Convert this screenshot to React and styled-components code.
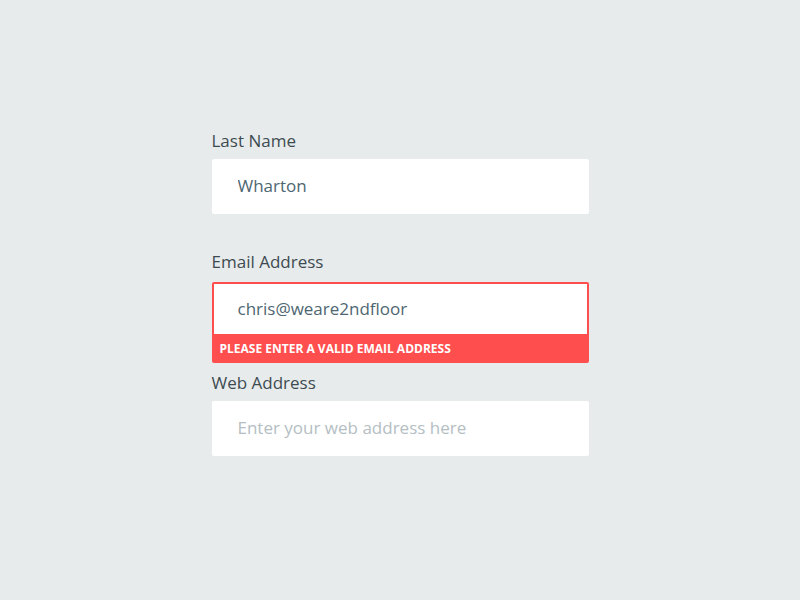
import React from 'react'
import styled, { createGlobalStyle } from 'styled-components'

const GlobalStyle = createGlobalStyle`
  html, body {
    margin: 0;
    padding: 0;
    background: #e8ebec;
  }
  body {
    font-family: "Open Sans", "Liberation Sans", sans-serif;
  }
`

const Page = styled.div`
  width: 800px;
  height: 600px;
  display: flex;
  justify-content: center;
  padding-top: 131px;
  box-sizing: border-box;
`

const Form = styled.form`
  width: 377px;
  display: flex;
  flex-direction: column;
`

const FieldGroup = styled.div`
  display: flex;
  flex-direction: column;
  margin-bottom: ${p => (p.$error ? 10 : 38)}px;
`

const Label = styled.label`
  font-size: 17px;
  line-height: 20px;
  color: #3d4b51;
  margin-bottom: ${p => (p.$error ? 10 : 8)}px;
`

const InputFrame = styled.div`
  display: flex;
  flex-direction: column;
  background: #fff;
  border-radius: 2px;
  border: ${p => (p.$error ? '2px solid #ff4e4e' : 'none')};
  overflow: hidden;
`

const Input = styled.input`
  height: ${p => (p.$error ? 50 : 55)}px;
  border: none;
  outline: none;
  background: #fff;
  padding: 0 0 2px ${p => (p.$error ? 24 : 26)}px;
  font-family: "Open Sans", "Liberation Sans", sans-serif;
  font-size: 17px;
  color: #4e6671;
  box-sizing: border-box;
  width: 100%;

  &::placeholder {
    color: #b4bec3;
  }
`

const ErrorBand = styled.div`
  background: #ff4e4e;
  color: #fff;
  font-size: 12px;
  font-weight: 700;
  text-transform: uppercase;
  height: 27px;
  line-height: 29px;
  padding-left: 6px;
`

function Field({ label, value, placeholder, error }) {
  return (
    <FieldGroup $error={!!error}>
      <Label $error={!!error}>{label}</Label>
      <InputFrame $error={!!error}>
        <Input $error={!!error} defaultValue={value} placeholder={placeholder} />
        {error && <ErrorBand>{error}</ErrorBand>}
      </InputFrame>
    </FieldGroup>
  )
}

export default function App() {
  return (
    <>
      <GlobalStyle />
      <Page>
        <Form>
          <Field label="Last Name" value="Wharton" />
          <Field
            label="Email Address"
            value="chris@weare2ndfloor"
            error="Please enter a valid email address"
          />
          <Field label="Web Address" placeholder="Enter your web address here" />
        </Form>
      </Page>
    </>
  )
}
